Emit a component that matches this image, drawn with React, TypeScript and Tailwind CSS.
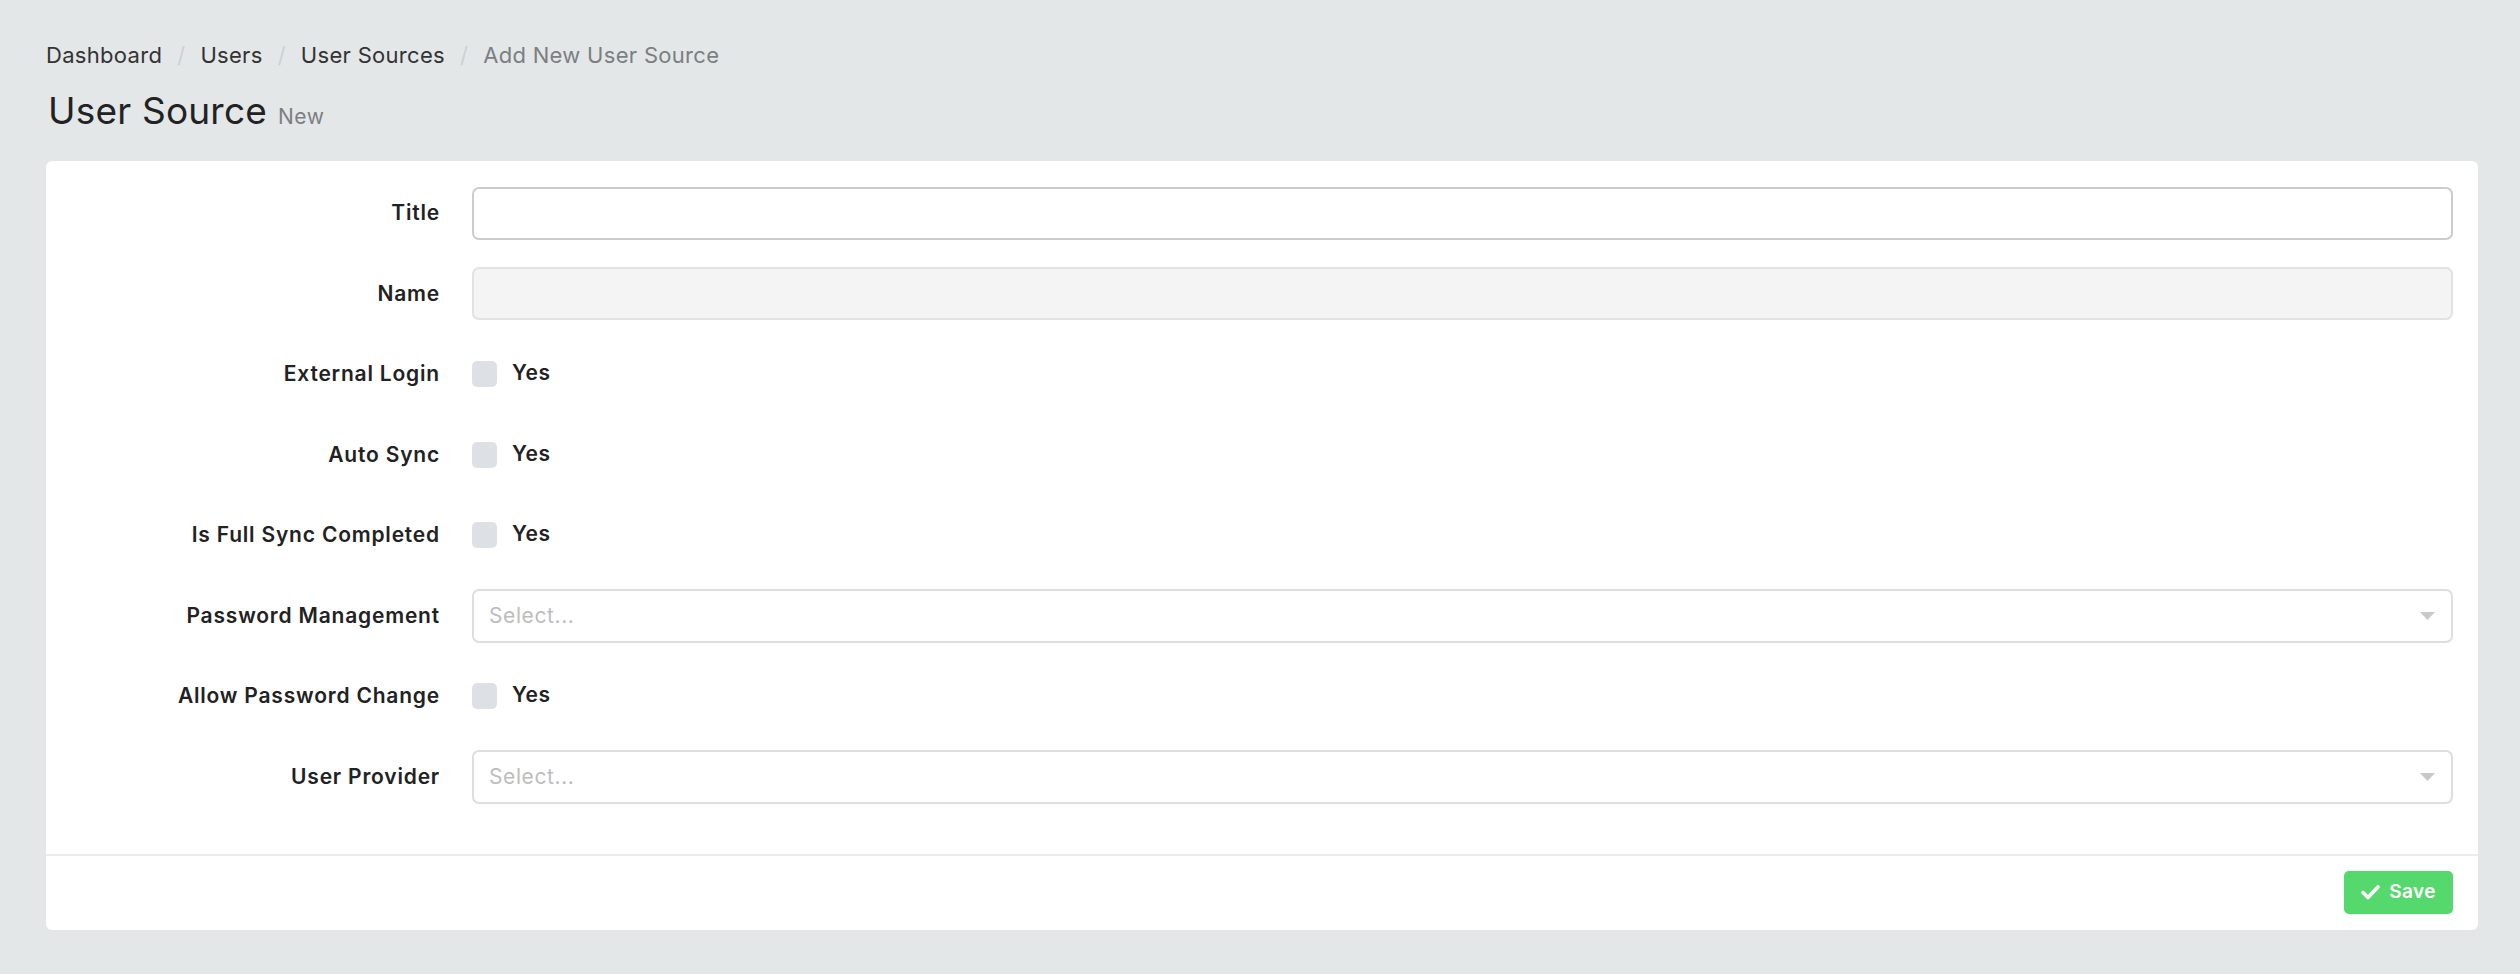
import React from "react";

const font = { fontFamily: "Inter, 'Noto Sans', sans-serif" };

const Checkbox = () => (
  <div className="flex items-center gap-[15px]">
    <span className="w-[25px] h-[26px] rounded-[5px] bg-[#dde1e6]" />
    <span className="text-[21px] font-semibold tracking-[0.6px] text-[#222] -mt-[2px]">Yes</span>
  </div>
);

const Select = () => (
  <div className="flex items-center justify-between h-[54px] border-2 border-[#dedede] rounded-[7px] pl-[15px] pr-[15px] bg-white">
    <span className="text-[21px] tracking-[0.6px] text-[#bdbdbd]">Select...</span>
    <svg width="15" height="8" viewBox="0 0 15 8" className="mr-[1px]">
      <path d="M0 0 L15 0 L7.5 8 Z" fill="#c8c8c8" />
    </svg>
  </div>
);

const rows: { label: string; field: React.ReactNode }[] = [
  {
    label: "Title",
    field: <input className="w-full h-[53px] border-2 border-[#cccccc] rounded-[7px] px-[15px] outline-none bg-white" />,
  },
  {
    label: "Name",
    field: <input disabled className="w-full h-[53px] border-2 border-[#e2e2e2] rounded-[7px] px-[15px] bg-[#f4f4f4]" />,
  },
  { label: "External Login", field: <Checkbox /> },
  { label: "Auto Sync", field: <Checkbox /> },
  { label: "Is Full Sync Completed", field: <Checkbox /> },
  { label: "Password Management", field: <Select /> },
  { label: "Allow Password Change", field: <Checkbox /> },
  { label: "User Provider", field: <Select /> },
];

export default function App() {
  return (
    <div className="min-h-[974px] bg-[#e3e7e8] pl-[46px] pr-[42px] pt-[39px]" style={font}>
      <nav className="flex items-center h-[32px] text-[22px] tracking-[0.3px] text-[#333]">
        <span>Dashboard</span>
        <span className="px-[15px] text-[#cdd1d3]">/</span>
        <span>Users</span>
        <span className="px-[15px] text-[#cdd1d3]">/</span>
        <span>User Sources</span>
        <span className="px-[15px] text-[#cdd1d3]">/</span>
        <span className="text-[#7b7f82]">Add New User Source</span>
      </nav>
      <h1 className="flex items-baseline gap-[11px] h-[46px] mt-[17px] ml-[2px] leading-[46px]">
        <span className="text-[37px] tracking-[0.2px] text-[#222]">User Source</span>
        <span className="text-[21px] tracking-[0.5px] text-[#7b7f82]">New</span>
      </h1>
      <div className="mt-[27px] bg-white rounded-[6px]">
        <div className="flex flex-col gap-[26.5px] pt-[25px] pb-[50px] pr-[25px]">
          {rows.map((r) => (
            <div key={r.label} className="flex items-center h-[54px]">
              <label className="w-[394px] shrink-0 text-right text-[21px] font-semibold tracking-[0.8px] text-[#222]">
                {r.label}
              </label>
              <div className="flex-1 ml-[32px]">{r.field}</div>
            </div>
          ))}
        </div>
        <div className="border-t-2 border-[#ececec] flex justify-end pt-[15px] pb-[16px] pr-[25px]">
          <button className="flex items-center gap-[9px] h-[43px] w-[109px] justify-center rounded-[5px] bg-[#55d86c] text-white text-[19px] font-semibold tracking-[0.4px]">
            <svg width="19" height="15" viewBox="0 0 19 15">
              <path d="M2 7.5 L7 12.5 L17 2" fill="none" stroke="white" strokeWidth="3.6" strokeLinecap="round" strokeLinejoin="round" />
            </svg>
            Save
          </button>
        </div>
      </div>
    </div>
  );
}
